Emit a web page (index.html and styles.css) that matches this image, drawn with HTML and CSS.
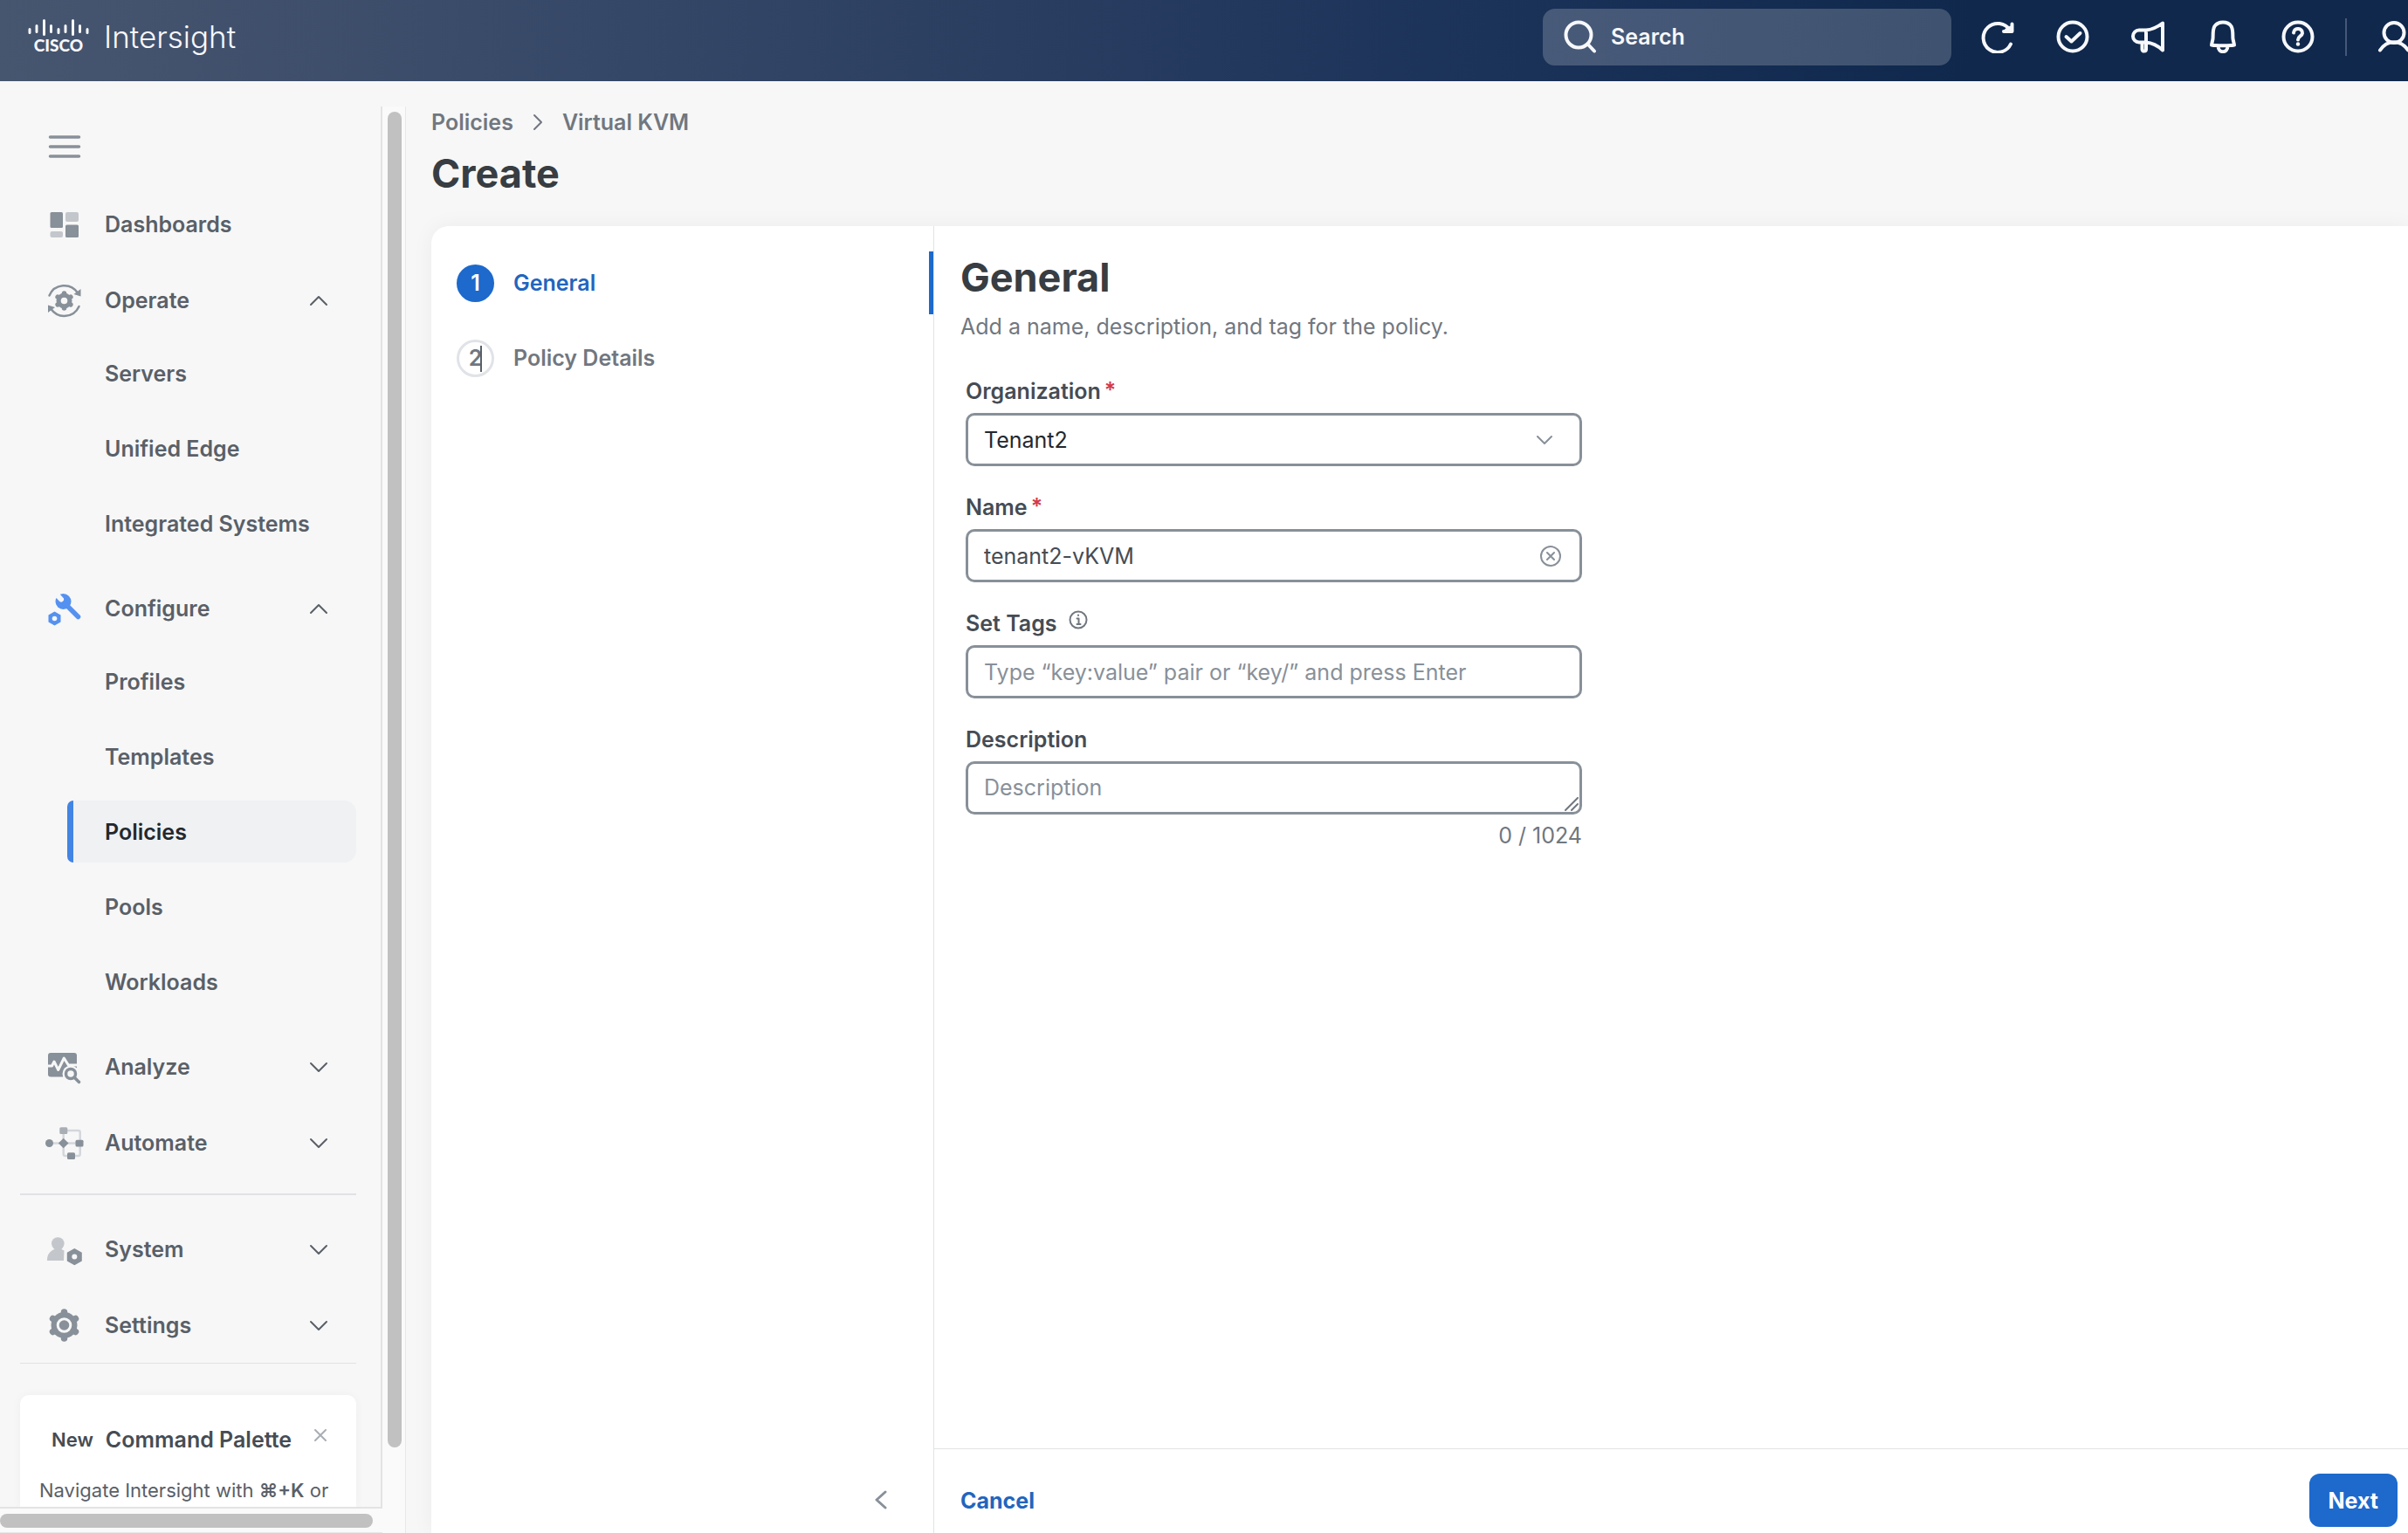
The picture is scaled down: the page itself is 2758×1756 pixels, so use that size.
FILE: index.html
```html
<!DOCTYPE html>
<html lang="en">
<head>
  <meta charset="UTF-8" />
  <meta name="viewport" content="width=device-width, initial-scale=1.0"/>
  <title>Intersight - Create Virtual KVM Policy</title>
  <link rel="stylesheet" href="styles.css">
</head>
<body>
  <!-- Chevron shapes shared by the menu -->
  <svg class="defs" aria-hidden="true">
    <symbol id="chevron-up" viewBox="0 0 24 24"><path d="M3 17 12 8l9 9"/></symbol>
    <symbol id="chevron-down" viewBox="0 0 24 24"><path d="M3 8l9 9 9-9"/></symbol>
  </svg>

  <header class="topbar">
    <a class="brand" href="#">
      <span class="logo">
        <svg width="70" height="20" viewBox="0 0 70 20">
          <path d="M2 11.500v4M10 7.500v7M18.500 1.500v16M26.500 7.500v7M35 11.500v4M43 7.500v7M51.500 1.500v16M59.500 7.500v7M68 11.500v4"/>
        </svg>
        <span class="logo-text">CISCO</span>
      </span>
      <span class="product">Intersight</span>
    </a>

    <button class="search">
      <svg width="38" height="38" viewBox="0 0 38 38"><circle cx="17" cy="17" r="14.500"/><path d="M27.500 27.500 35 35.500"/></svg>
      Search
    </button>

    <div class="tools">
      <button class="tool" aria-label="Refresh">
        <svg width="38" height="38" viewBox="0 0 38 38"><path d="M34 27.500A16.500 16.500 0 1 1 33 11.500M35.500 4.500v8.500h-9.500M29 11.500l5-3"/></svg>
      </button>
      <button class="tool" aria-label="Requests">
        <svg width="38" height="38" viewBox="0 0 38 38"><circle cx="19" cy="19" r="16.500"/><path d="M11.500 19l6 5.500L27.500 15"/></svg>
      </button>
      <button class="tool" aria-label="Announcements">
        <svg width="38" height="38" viewBox="0 0 38 38"><path d="M17 11.500h-8a6.700 6.700 0 0 0 0 14h8M17 11.500C24 11 30 8 36 3.500v31C30 29 24 26 17 25.500zM12.500 25.500v8c0 3 4.500 2.500 4.500 0v-8"/></svg>
      </button>
      <button class="tool" aria-label="Alarms">
        <svg width="38" height="38" viewBox="0 0 38 38"><path d="M6 28.500l1.500-7c.5-5-.5-10 2-14.500 4-6 15-6 19 0 2.500 4.500 1.500 9.500 2 14.500l1.500 7c.3 1-26.300 1-26 0zM13.500 29.500c0 9 11 9 11 0"/></svg>
      </button>
      <button class="tool" aria-label="Help">
        <svg width="38" height="38" viewBox="0 0 38 38"><circle cx="19" cy="19" r="16.500"/><path d="M14 14.500c.5-6.500 10.500-5.500 10 .5-.3 3.500-5 3.500-5 7.500"/><circle class="dot" cx="19" cy="27.500" r="2.200"/></svg>
      </button>
      <span class="divider"></span>
      <button class="tool account" aria-label="Account">
        <svg width="38" height="38" viewBox="0 0 38 38"><circle cx="19" cy="14.500" r="11.500"/><path d="M3 34.500C11 22 27 22 35 34.500"/></svg>
      </button>
    </div>
  </header>

  <div class="layout">
    <div class="sidebar">
      <nav class="menu">
        <button class="hamburger" aria-label="Toggle menu">
          <svg width="38" height="30" viewBox="0 0 38 30"><path d="M2.500 4h33M2.500 15h33M2.500 26h33"/></svg>
        </button>

        <a class="menu-row" href="#">
          <svg class="menu-icon" viewBox="0 0 44 44">
            <rect x="5.500" y="8" width="14.500" height="18" rx="1.500"/><rect x="23" y="22.500" width="15" height="14.500" rx="1.500"/>
            <g class="pale"><rect x="23" y="8" width="15" height="11" rx="2"/><rect x="5.500" y="30" width="14.500" height="7" rx="2"/></g>
          </svg>
          <span>Dashboards</span>
        </a>

        <button class="menu-row">
          <svg class="menu-icon" viewBox="0 0 44 44">
            <circle cx="21.500" cy="22.500" r="9"/>
            <path class="line" stroke-width="5.500" d="M21.500 14v17M14.100 18.200l14.800 8.600M28.900 18.200l-14.800 8.600"/>
            <circle class="hole" cx="21.500" cy="22.500" r="3.800"/>
            <path class="line" stroke-width="2.500" d="M4.500 16.500A18.500 18.500 0 0 1 37 13.500M38.500 29A18.500 18.500 0 0 1 6.500 32"/>
            <path d="M40.500 9v8.500L32.500 15zM3 27.500v8.500l8-6z"/>
          </svg>
          <span>Operate</span>
          <svg class="chevron"><use href="#chevron-up"/></svg>
        </button>
        <div class="submenu">
          <a href="#">Servers</a>
          <a href="#">Unified Edge</a>
          <a href="#">Integrated Systems</a>
        </div>

        <button class="menu-row">
          <svg class="menu-icon blue" viewBox="0 0 44 44">
            <circle cx="20.500" cy="14" r="9"/>
            <path class="line" stroke-width="5.500" d="M22 16l15.500 15.500"/>
            <path class="cut" stroke-width="6" d="M12 5l6 6.500"/>
            <path d="M10.500 25.500l7 4v8l-7 4-7-4v-8z"/>
            <circle class="hole" cx="10.500" cy="33.500" r="2.800"/>
          </svg>
          <span>Configure</span>
          <svg class="chevron"><use href="#chevron-up"/></svg>
        </button>
        <div class="submenu">
          <a href="#">Profiles</a>
          <a href="#">Templates</a>
          <a href="#" class="active">Policies</a>
          <a href="#">Pools</a>
          <a href="#">Workloads</a>
        </div>

        <button class="menu-row">
          <svg class="menu-icon" viewBox="0 0 44 44">
            <rect x="3" y="6" width="33" height="27.500" rx="3"/>
            <path class="cut" stroke-width="3" d="M2 21h5.500l2.500-5 4.700 9.500 6.600-13.500 5 8H38"/>
            <circle class="hole" cx="29" cy="30" r="9.500"/>
            <path class="line" stroke-width="3.500" d="M33 34l5.500 5.500"/>
            <circle class="line" stroke-width="3.500" cx="29" cy="30" r="5.500"/>
          </svg>
          <span>Analyze</span>
          <svg class="chevron"><use href="#chevron-down"/></svg>
        </button>

        <button class="menu-row">
          <svg class="menu-icon" viewBox="0 0 44 44">
            <path class="line faint" stroke-width="2.500" d="M4 22.500h34M20.700 8h17a2 2 0 0 1 2 2v25a2 2 0 0 1-2 2h-15a2 2 0 0 1-2-2z"/>
            <circle cx="4.500" cy="22.500" r="4.500"/>
            <path d="M20.700 16.700l5.800 5.800-5.800 5.800-5.800-5.800z"/>
            <rect x="34.500" y="18.700" width="9" height="7.700" rx="1.500"/>
            <rect x="25" y="33.300" width="9" height="7.700" rx="1.500"/>
            <rect class="mid" x="16.300" y="4.300" width="9" height="7.700" rx="1.500"/>
          </svg>
          <span>Automate</span>
          <svg class="chevron"><use href="#chevron-down"/></svg>
        </button>

        <hr class="rule">

        <button class="menu-row">
          <svg class="menu-icon" viewBox="0 0 44 44">
            <g class="pale"><circle cx="14.300" cy="15.500" r="7.300"/><path d="M2 35c0-7 3-11 8.500-13l-.5-3h9l-.5 3 3 1.500-.5 11.500z"/></g>
            <path d="M33.300 21l8.500 4.800v9.600l-8.500 4.900-8.500-4.900v-9.600z"/>
            <circle class="hole" cx="33.300" cy="30.600" r="3"/>
          </svg>
          <span>System</span>
          <svg class="chevron"><use href="#chevron-down"/></svg>
        </button>

        <button class="menu-row">
          <svg class="menu-icon" viewBox="0 0 44 44">
            <circle cx="21.500" cy="22" r="15"/>
            <path class="line" stroke-width="7.500" d="M21.500 7v30M8.500 14.500l26 15M34.500 14.500l-26 15"/>
            <circle class="cut" stroke-width="3" cx="21.500" cy="22" r="7.300"/>
          </svg>
          <span>Settings</span>
          <svg class="chevron"><use href="#chevron-down"/></svg>
        </button>

        <hr class="rule thin">

        <div class="promo">
          <div class="promo-head">
            <span class="badge">New</span>
            <strong>Command Palette</strong>
            <button aria-label="Dismiss"><svg width="14" height="14" viewBox="0 0 14 14"><path d="M1 1l12 12M13 1 1 13"/></svg></button>
          </div>
          <p>Navigate Intersight with <b>⌘+K</b> or</p>
        </div>
      </nav>
      <div class="track track-y"><span class="thumb"></span></div>
      <div class="track track-x"><span class="thumb"></span></div>
    </div>

    <main class="page">
      <div class="breadcrumb">
        <a href="#">Policies</a>
        <svg width="12" height="20" viewBox="0 0 12 20"><path d="M2 2l8 8-8 8"/></svg>
        <a href="#">Virtual KVM</a>
      </div>
      <h1>Create</h1>

      <div class="card">
        <div class="steps">
          <a class="step current" href="#"><span class="num">1</span>General</a>
          <a class="step" href="#"><span class="num caret">2</span>Policy Details</a>
          <button class="collapse" aria-label="Collapse steps">
            <svg width="14" height="22" viewBox="0 0 14 22"><path d="M12 2 2 11l10 9"/></svg>
          </button>
        </div>

        <div class="content">
          <form class="form">
            <h2>General</h2>
            <p class="intro">Add a name, description, and tag for the policy.</p>

            <div class="fields">
              <label for="org">Organization<span class="req">*</span></label>
              <div class="control">
                <select id="org"><option>Tenant2</option></select>
                <svg class="select-arrow" width="18" height="12" viewBox="0 0 18 12"><path d="M1 2l8 8 8-8"/></svg>
              </div>

              <label for="name">Name<span class="req">*</span></label>
              <div class="control">
                <input id="name" type="text" value="tenant2-vKVM">
                <button type="button" class="clear" aria-label="Clear name">
                  <svg width="26" height="26" viewBox="0 0 26 26"><circle cx="13" cy="13" r="11"/><path d="M9 9l8 8M17 9l-8 8"/></svg>
                </button>
              </div>

              <label for="tags">Set Tags
                <svg class="info" width="24" height="24" viewBox="0 0 24 24"><circle cx="12" cy="12" r="9.500"/><path d="M10.500 10.500h2V17M12 6.500v.5M10.500 17h4"/></svg>
              </label>
              <div class="control">
                <input id="tags" type="text" placeholder="Type “key:value” pair or “key/” and press Enter">
              </div>

              <label for="description">Description</label>
              <div class="control">
                <textarea id="description" rows="1" placeholder="Description"></textarea>
                <svg class="grip" width="16" height="16" viewBox="0 0 16 16"><path d="M1 15 15 1M8 15l7-7"/></svg>
              </div>
              <div class="counter">0 / 1024</div>
            </div>
          </form>

          <footer class="actions">
            <button class="cancel">Cancel</button>
            <button class="next">Next</button>
          </footer>
        </div>
      </div>
    </main>
  </div>
</body>
</html>
```
FILE: styles.css
```css
* {
  box-sizing: border-box;
}

html, body {
  height: 100%;
  margin: 0;
}

body {
  display: flex;
  flex-direction: column;
  font-family: Inter, "Liberation Sans", sans-serif;
  font-size: 25px;
  line-height: 32px;
  color: #464c54;
  background: #f7f7f7;
  overflow: hidden;
}

button, input, select, textarea {
  font: inherit;
  color: inherit;
}

button {
  background: none;
  border: none;
  padding: 0;
  cursor: pointer;
}

a {
  color: inherit;
  text-decoration: none;
}

svg {
  display: block;
  flex: none;
  fill: none;
  stroke: currentColor;
  stroke-width: 2;
  stroke-linecap: round;
  stroke-linejoin: round;
}

.defs {
  position: absolute;
  width: 0;
  height: 0;
}

/* Top bar */
.topbar {
  display: flex;
  align-items: center;
  height: 93px;
  flex: none;
  padding: 0 0 9px 32px;
  color: #f7f8fc;
  background: linear-gradient(to right, #47566f 0%, #3b4c6a 18%, #1b3259 62%, #0f284c 82%);
  overflow: hidden;
}

.brand {
  display: flex;
  align-items: center;
  gap: 17px;
  margin-right: auto;
}

.logo {
  display: flex;
  flex-direction: column;
  align-items: center;
}

.logo svg {
  stroke-width: 3;
}

.logo-text {
  font-family: Lato, sans-serif;
  font-size: 19px;
  font-weight: 900;
  line-height: 20px;
}

.product {
  font-size: 35px;
  font-weight: 300;
  line-height: 40px;
}

.search {
  display: flex;
  align-items: center;
  gap: 16px;
  width: 468px;
  height: 65px;
  margin-right: 34px;
  padding-left: 24px;
  border-radius: 14px;
  background: rgba(255, 255, 255, 0.2);
  font-weight: 600;
}

.search svg {
  stroke-width: 4;
}

.tools {
  display: flex;
  align-items: center;
  gap: 48px;
}

.tool svg {
  stroke-width: 4;
}

.tool .dot {
  fill: currentColor;
  stroke: none;
}

.divider {
  width: 2px;
  height: 43px;
  margin: 0 -13px;
  background: #46587a;
}

.account {
  margin-right: -3px;
}

/* Layout */
.layout {
  display: flex;
  flex: 1;
  min-height: 0;
}

.sidebar {
  display: grid;
  grid-template-columns: 1fr 27px;
  grid-template-rows: 1fr 28px;
  width: 465px;
  flex: none;
  padding-top: 29px;
}

.menu {
  display: flex;
  flex-direction: column;
  min-height: 0;
  padding: 28px 28px 0 23px;
  border-right: 2px solid #e3e3e3;
  border-bottom: 2px solid #e3e3e3;
  color: #596068;
  font-weight: 600;
  overflow: hidden;
}

.menu > * {
  flex: none;
}

.hamburger {
  align-self: flex-start;
  display: flex;
  align-items: center;
  height: 36px;
  margin: 0 0 35px 32px;
  color: #889099;
}

.hamburger svg {
  stroke-width: 3.5;
}

.menu-row {
  display: flex;
  align-items: center;
  gap: 24px;
  height: 72px;
  padding: 0 31px 0 29px;
  font-weight: 600;
  text-align: left;
}

.menu-row + .menu-row {
  margin-top: 15px;
}

.menu-row .chevron {
  width: 24px;
  height: 24px;
  margin-left: auto;
}

.menu-icon {
  width: 44px;
  height: 44px;
  fill: #889099;
  stroke: none;
}

.menu-icon .line {
  fill: none;
  stroke: #889099;
}

.menu-icon.blue {
  fill: #5591f0;
}

.menu-icon.blue .line {
  stroke: #5591f0;
}

.menu-icon .line.faint {
  stroke: #d3d7dc;
}

.menu-icon .pale {
  fill: #c3c6cb;
}

.menu-icon .mid {
  fill: #a9aeb5;
}

.menu-icon .hole {
  fill: #f7f7f7;
}

.menu-icon .cut {
  fill: none;
  stroke: #f7f7f7;
}

.submenu {
  display: flex;
  flex-direction: column;
  gap: 15px;
  margin: 12px 0 26px 54px;
}

.submenu a {
  display: flex;
  align-items: center;
  height: 71px;
  padding-left: 36px;
  border-left: 7px solid transparent;
  border-radius: 7px 14px 14px 7px;
}

.submenu .active {
  color: #23282e;
  background: #eff1f3;
  border-left-color: #4285e4;
}

.rule {
  width: 100%;
  height: 2px;
  margin: 22px 0 26px;
  border: none;
  background: #e0e2e5;
}

.rule.thin {
  height: 1px;
  margin: 7px 0 36px;
}

.menu .promo {
  flex: 1 0 auto;
  padding: 35px 22px 0;
  border-radius: 10px 10px 0 0;
  background: #fff;
  box-shadow: 0 0 12px rgba(0, 0, 0, 0.04);
}

.promo-head {
  display: flex;
  align-items: center;
  gap: 14px;
  padding: 0 12px 0 14px;
  color: #464c54;
}

.promo-head strong {
  font-weight: 600;
}

.badge {
  font-size: 22px;
}

.promo-head button {
  margin: 0 0 10px auto;
  color: #a9aeb5;
}

.promo p {
  margin: 26px 0 0;
  font-size: 22px;
  font-weight: 400;
  white-space: nowrap;
}

.promo b {
  font-weight: 600;
}

/* Scroll tracks */
.track {
  background: #fafafa;
}

.track-y {
  grid-row: 1 / 3;
  grid-column: 2;
  padding: 6px 4px 0 6px;
  border-right: 1px solid #e8e8e8;
}

.track-x {
  grid-row: 2;
  grid-column: 1;
  padding: 6px 11px 0 0;
  border-bottom: 1px solid #e8e8e8;
}

.thumb {
  display: block;
  border-radius: 8px;
  background: #c1c1c1;
}

.track-y .thumb {
  height: 94%;
}

.track-x .thumb {
  height: 16px;
}

/* Page */
.page {
  display: flex;
  flex-direction: column;
  flex: 1;
  min-width: 0;
  padding: 31px 0 0 29px;
}

.breadcrumb {
  display: flex;
  align-items: center;
  gap: 22px;
  color: #71777f;
  font-weight: 600;
}

h1, h2 {
  margin: 0;
  font-size: 45px;
  font-weight: 700;
  line-height: 48px;
  color: #373d42;
}

h1 {
  margin: 19px 0 36px;
}

.card {
  display: flex;
  flex: 1;
  border-radius: 20px 0 0 0;
  background: #fff;
  box-shadow: 0 0 24px rgba(0, 0, 0, 0.05);
}

.steps {
  display: flex;
  flex-direction: column;
  gap: 14px;
  width: 576px;
  padding-top: 29px;
  border-right: 1px solid #e0e3e5;
}

.step {
  display: flex;
  align-items: center;
  gap: 22px;
  height: 72px;
  padding-left: 29px;
  border-right: 5px solid transparent;
  color: #71777f;
  font-weight: 600;
}

.num {
  position: relative;
  display: flex;
  align-items: center;
  justify-content: center;
  width: 43px;
  height: 43px;
  border: 3px solid #e0e3e7;
  border-radius: 50%;
}

/* text cursor left over the step number */
.caret::after {
  content: "";
  position: absolute;
  top: 4px;
  left: 24px;
  width: 2px;
  height: 30px;
  background: #596068;
}

.step.current {
  color: #2265be;
  border-right-color: #1d69cc;
}

.current .num {
  color: #fff;
  background: #1d69cc;
  border-color: #1d69cc;
}

.collapse {
  align-self: flex-end;
  margin: auto 53px 27px 0;
  color: #889099;
}

.collapse svg {
  stroke-width: 3;
}

.content {
  display: flex;
  flex-direction: column;
  flex: 1;
}

.form {
  flex: 1;
  padding: 35px 30px 0;
}

.intro {
  margin: 16px 0 42px;
  color: #71777f;
}

.fields {
  max-width: 706px;
  margin-left: 6px;
}

.fields label {
  display: flex;
  align-items: center;
  height: 32px;
  margin-bottom: 9px;
  font-weight: 600;
}

.req {
  margin: 0 0 2px 4px;
  color: #d5394a;
}

.info {
  margin: 0 0 8px 12px;
  color: #71777f;
}

.control {
  position: relative;
  margin-bottom: 31px;
}

.control input,
.control select,
.control textarea {
  display: block;
  width: 100%;
  height: 61px;
  padding: 0 18px;
  border: 3px solid #889099;
  border-radius: 10px;
  background: #fff;
  outline: none;
}

.control select {
  appearance: none;
  color: #23282e;
}

.control textarea {
  padding-top: 11px;
  resize: none;
  overflow: hidden;
}

.control ::placeholder {
  color: #889099;
  opacity: 1;
}

.select-arrow,
.clear,
.grip {
  position: absolute;
  color: #889099;
}

.select-arrow {
  right: 34px;
  top: 25px;
  pointer-events: none;
}

.clear {
  right: 23px;
  top: 18px;
}

.grip {
  right: 4px;
  bottom: 4px;
  color: #71777f;
}

.counter {
  margin-top: -23px;
  text-align: right;
  color: #71777f;
}

.actions {
  display: flex;
  justify-content: space-between;
  padding: 28px 12px 7px 30px;
  border-top: 1px solid #e0e3e5;
}

.cancel {
  color: #2265be;
  font-weight: 700;
}

.next {
  height: 61px;
  padding: 0 22px;
  border-radius: 12px;
  color: #fff;
  background: #1d69cc;
  font-weight: 700;
}
```
